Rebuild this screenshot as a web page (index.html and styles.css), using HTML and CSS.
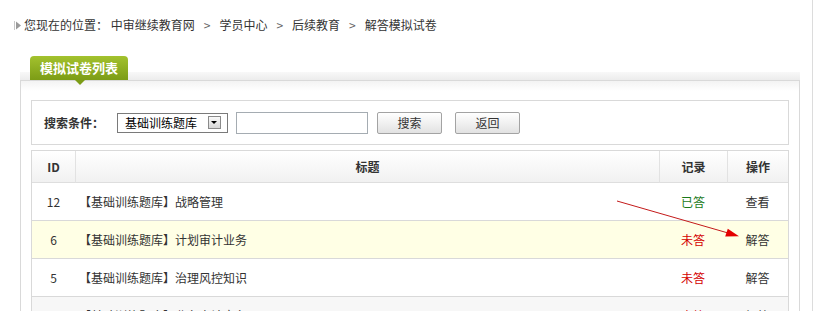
FILE: index.html
```html
<!DOCTYPE html>
<html lang="zh-CN">
<head>
    <meta charset="UTF-8">
    <meta name="viewport" content="width=device-width, initial-scale=1.0">
    <title>解答模拟试卷</title>
    <link rel="stylesheet" href="styles.css">
</head>
<body>
<div class="page">
    <div class="crumb">
        <svg class="crumb-icon" width="7" height="9" viewBox="0 0 7 9">
            <rect x="0" y="0" width="1" height="9" fill="#c8c8c8"/>
            <polygon points="2,0.5 7,4.5 2,8.5" fill="#9a9a9a"/>
        </svg>
        <span>您现在的位置： 中审继续教育网</span><span class="sep">&gt;</span><span>学员中心</span><span class="sep">&gt;</span><span>后续教育</span><span class="sep">&gt;</span><span>解答模拟试卷</span>
    </div>

    <div class="panel">
        <div class="panel-head">
            <div class="tab">模拟试卷列表</div>
        </div>
        <div class="panel-body">
            <div class="search-bar">
                <span class="search-label">搜索条件：</span>
                <div class="fake-select">
                    <span>基础训练题库</span>
                    <span class="select-btn"></span>
                </div>
                <label for="keyword"></label><input type="text" id="keyword" class="search-input">
                <button class="btn">搜索</button>
                <button class="btn btn-back">返回</button>
            </div>

            <div class="list">
                <table class="paper-table">
                    <thead>
                    <tr>
                        <th class="col-id">ID</th>
                        <th class="col-title">标题</th>
                        <th class="col-rec">记录</th>
                        <th class="col-op">操作</th>
                    </tr>
                    </thead>
                    <tbody>
                    <tr>
                        <td class="col-id">12</td>
                        <td class="col-title">【基础训练题库】战略管理</td>
                        <td class="col-rec done">已答</td>
                        <td class="col-op">查看</td>
                    </tr>
                    <tr class="row-hl">
                        <td class="col-id">6</td>
                        <td class="col-title">【基础训练题库】计划审计业务</td>
                        <td class="col-rec todo">未答</td>
                        <td class="col-op">解答</td>
                    </tr>
                    <tr>
                        <td class="col-id">5</td>
                        <td class="col-title">【基础训练题库】治理风控知识</td>
                        <td class="col-rec todo">未答</td>
                        <td class="col-op">解答</td>
                    </tr>
                    <tr class="row-gray">
                        <td class="col-id">4</td>
                        <td class="col-title">【基础训练题库】业务审计实务</td>
                        <td class="col-rec todo">未答</td>
                        <td class="col-op">解答</td>
                    </tr>
                    </tbody>
                </table>
                <!-- стрелка-подсказка поверх таблицы -->
                <svg class="hint-arrow" width="758" height="170">
                    <line x1="585" y1="50" x2="695" y2="81.7" stroke="#c41a1a" stroke-width="1"/>
                    <polygon points="693.2,85.6 695.8,77.8 707,85.2" fill="#e40000"/>
                </svg>
            </div>
        </div>
    </div>
</div>
</body>
</html>
```

FILE: styles.css
```css
body {
    margin: 0;
    background-color: #fff;
    font-family: "Noto Sans CJK SC", "Noto Sans", sans-serif;
    font-size: 12px;
    color: #333;
}

.page {
    width: 812px;
    min-height: 100vh;
    border-right: 1px solid #dcdcdc;
    overflow: hidden;
}

.crumb {
    display: flex;
    align-items: center;
    padding: 18px 0 0 14px;
    height: 14px;
    line-height: 14px;
    white-space: nowrap;
}

.crumb-icon {
    margin-right: 3px;
}

.crumb .sep {
    margin: 0 9px;
    color: #666;
}

.panel {
    margin: 24px 0 0 20px;
    width: 780px;
}

.panel-head {
    height: 24px;
    border-bottom: 1px solid #d9d9d9;
    background: linear-gradient(to bottom, transparent 16px, #f8f8f8 16px, #ececec 24px);
}

.tab {
    position: relative;
    margin-left: 10px;
    width: 98px;
    height: 24px;
    line-height: 24px;
    text-align: center;
    border-radius: 4px 4px 0 0;
    background: linear-gradient(to bottom, #a3c22e, #7c9c16);
    color: #fff;
    font-size: 13px;
    font-weight: bold;
}

.tab::after {
    content: "";
    position: absolute;
    left: 45px;
    bottom: -5px;
    border-left: 5px solid transparent;
    border-right: 5px solid transparent;
    border-top: 5px solid #7c9c16;
}

.panel-body {
    border-left: 1px solid #d9d9d9;
    border-right: 1px solid #d9d9d9;
    padding: 19px 10px 20px 10px;
    background: linear-gradient(to bottom, #f3f3f3, #fff 10px);
}

.search-bar {
    display: flex;
    align-items: center;
    height: 43px;
    padding-left: 12px;
    border: 1px solid #d9d9d9;
    background-color: #fff;
}

.search-label {
    font-weight: bold;
    margin-right: 13px;
}

.fake-select {
    display: flex;
    align-items: center;
    justify-content: space-between;
    box-sizing: border-box;
    width: 111px;
    height: 20px;
    padding: 0 6px 0 7px;
    border: 1px solid #7a7a7a;
    font-size: 12px;
    color: #000;
}

.select-btn {
    position: relative;
    box-sizing: border-box;
    width: 13px;
    height: 13px;
    border: 1px solid #8a8a8a;
    background: linear-gradient(to bottom, #fafafa, #d6d6d6);
}

.select-btn::after {
    content: "";
    position: absolute;
    left: 2px;
    top: 4px;
    border-left: 3.5px solid transparent;
    border-right: 3.5px solid transparent;
    border-top: 3.5px solid #000;
}

.search-input {
    box-sizing: border-box;
    width: 132px;
    height: 22px;
    margin-left: 8px;
    border: 1px solid #a5acb2;
    padding: 0 3px;
}

.btn {
    box-sizing: border-box;
    width: 65px;
    height: 22px;
    margin-left: 9px;
    border: 1px solid #a3a3a3;
    border-radius: 2px;
    background: linear-gradient(to bottom, #ffffff, #e2e2e2);
    font-family: inherit;
    font-size: 12px;
    color: #333;
    padding: 0;
}

.btn-back {
    margin-left: 13px;
}

.list {
    position: relative;
    margin-top: 5px;
    border: 1px solid #d9d9d9;
}

.paper-table {
    width: 100%;
    border-collapse: separate;
    border-spacing: 0;
    table-layout: fixed;
}

.paper-table th {
    padding: 0;
    line-height: 31px;
    border-bottom: 1px solid #dedede;
    background: linear-gradient(to bottom, #ffffff, #f1f1f1);
    font-weight: bold;
    color: #333;
}

.paper-table th + th {
    border-left: 1px solid #e2e2e2;
}

.paper-table td {
    padding: 0;
    line-height: 37px;
    border-bottom: 1px solid #d9d9d9;
    text-align: center;
    white-space: nowrap;
}

.col-id {
    width: 43px;
}

.col-rec {
    width: 67px;
}

.col-op {
    width: 60px;
}

.paper-table td.col-title {
    text-align: left;
    padding-left: 4px;
}

.row-hl td {
    background-color: #ffffe5;
}

.row-gray td {
    background-color: #f7f7f7;
}

.done {
    color: #1a7a1a;
}

.todo {
    color: #d40000;
}

.hint-arrow {
    position: absolute;
    left: 0;
    top: 0;
    pointer-events: none;
    overflow: visible;
}
```
